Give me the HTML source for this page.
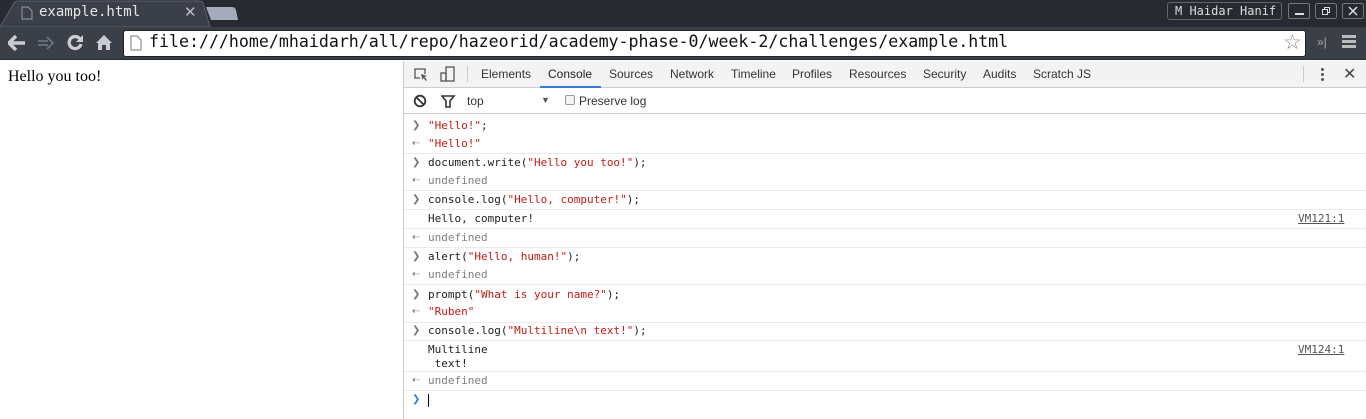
<!DOCTYPE html>
<html><head><meta charset="utf-8"><style>
*{margin:0;padding:0;box-sizing:border-box}
body{width:1366px;height:419px;overflow:hidden;background:#fff;position:relative;font-family:"Liberation Sans",sans-serif}
.abs{position:absolute}
.mono{font-family:"DejaVu Sans Mono","Liberation Mono",monospace}
.row{position:absolute;left:428px;font-family:"DejaVu Sans Mono",monospace;font-size:11px;color:#222;line-height:14px}
.s{color:#c41a16}
.u{color:#808080}
.ar{position:absolute;left:412px;font-size:10px;color:#777;line-height:14px}
.ln{position:absolute;left:404px;right:0;height:1px;background:#ebebeb}
.tab{position:absolute;top:67px;font-size:12px;color:#333}
</style></head><body>
<div class="abs" style="left:0;top:0;width:1366px;height:27px;background:#272a31"></div>
<svg class="abs" style="left:0;top:0" width="260" height="27">
<path d="M0 27 L14 3 Q15 1 18 1 L199 1 Q202 1 203 3 L210 27 Z" fill="#3b3f48" stroke="#5b6070"/>
<path d="M206 7 L232 7 Q235 7 236 10 L238 20 L211 20 Z" fill="#a3abbd"/>
</svg>
<svg class="abs" style="left:21px;top:6px" width="12" height="14"><path d="M1 1h6l4 4v8H1z" fill="none" stroke="#9a9ea8"/></svg>
<div class="abs mono" style="left:39px;top:4px;font-size:14px;color:#e6e6e6">example.html</div>
<div class="abs" style="left:184px;top:3px;font-size:15px;color:#bbb">✕</div>
<div class="abs mono" style="left:1167px;top:2px;width:115px;height:18px;border:1px solid #666;border-radius:3px;color:#ddd;font-size:12px;padding-left:7px;line-height:16px">M Haidar Hanif</div>
<div class="abs" style="left:1288px;top:3px;width:22px;height:16px;border:1px solid #777;border-radius:2px"><div class="abs" style="left:6px;top:9px;width:9px;height:2px;background:#ddd"></div></div>
<svg class="abs" style="left:1315px;top:3px" width="22" height="16"><rect x="0.5" y="0.5" width="21" height="15" rx="2" fill="none" stroke="#777"/><rect x="7.5" y="6.5" width="5" height="5" fill="none" stroke="#ddd"/><path d="M9.5 6.5V4.5h5v5h-2" fill="none" stroke="#ddd"/></svg>
<svg class="abs" style="left:1342px;top:3px" width="22" height="16"><rect x="0.5" y="0.5" width="21" height="15" rx="2" fill="none" stroke="#777"/><path d="M7 4l8 8M15 4l-8 8" stroke="#ddd" stroke-width="1.5"/></svg>
<div class="abs" style="left:0;top:27px;width:1366px;height:33px;background:#3b3f48;border-bottom:1px solid #2a2d33"></div>
<svg class="abs" style="left:8px;top:35px" width="18" height="16"><path d="M8 1L1 8l7 7M1 8h16" fill="none" stroke="#c9ccd2" stroke-width="3.5"/></svg>
<svg class="abs" style="left:37px;top:35px" width="18" height="16"><path d="M10 2l6 6-6 6M1 6h10M1 10h10" fill="none" stroke="#6d727c" stroke-width="1.8"/></svg>
<svg class="abs" style="left:67px;top:34px" width="17" height="17"><path d="M13 5A6 6 0 1 0 14 10" fill="none" stroke="#c9ccd2" stroke-width="3.3"/><path d="M16 1v7H9z" fill="#c9ccd2"/></svg>
<svg class="abs" style="left:95px;top:34px" width="18" height="17"><path d="M9 1 L1 9 H3 V16 H7 V11 H11 V16 H15 V9 H17 Z" fill="#c9ccd2"/></svg>
<div class="abs" style="left:123px;top:30px;width:1183px;height:27px;background:#fff;border:1px solid #222;border-radius:3px"></div>
<svg class="abs" style="left:130px;top:35px" width="12" height="16"><path d="M1 1h6l4 4v10H1z" fill="none" stroke="#777"/></svg>
<div class="abs mono" style="left:149px;top:32px;font-size:16.6px;color:#111">file:///home/mhaidarh/all/repo/hazeorid/academy-phase-0/week-2/challenges/example.html</div>
<div class="abs" style="left:1283px;top:30px;font-size:21px;color:#888">☆</div>
<div class="abs" style="left:1317px;top:35px;font-size:12px;color:#aaa">»|</div>
<div class="abs" style="left:1342px;top:35px;width:14px;height:3px;background:#bbb;box-shadow:0 5px 0 #bbb,0 10px 0 #bbb"></div>
<div class="abs" style="left:8px;top:68px;font-family:'Liberation Serif',serif;font-size:16px;color:#000">Hello you too!</div>
<div class="abs" style="left:403px;top:61px;width:1px;height:358px;background:#ccc"></div>
<div class="abs" style="left:404px;top:61px;width:962px;height:27px;background:#f3f3f3;border-bottom:1px solid #ccc"></div>
<svg class="abs" style="left:413px;top:67px" width="16" height="16"><path d="M7 11H2V2h10v5" fill="none" stroke="#555" stroke-width="1.3"/><path d="M8 7l6 2-2.5 1 2.5 3-1 1-2.5-3-1 2z" fill="#555"/></svg>
<svg class="abs" style="left:440px;top:66px" width="16" height="17"><rect x="6" y="1" width="8" height="14" fill="none" stroke="#555" stroke-width="1.3"/><rect x="1" y="7" width="5" height="8" fill="none" stroke="#555" stroke-width="1.3"/></svg>
<div class="abs" style="left:467px;top:66px;width:1px;height:16px;background:#ccc"></div>
<div class="tab" style="left:481px">Elements</div>
<div class="tab" style="left:548px;color:#222">Console</div>
<div class="abs" style="left:540px;top:86px;width:61px;height:2px;background:#3879d9"></div>
<div class="tab" style="left:609px">Sources</div>
<div class="tab" style="left:670px">Network</div>
<div class="tab" style="left:731px">Timeline</div>
<div class="tab" style="left:792px">Profiles</div>
<div class="tab" style="left:849px">Resources</div>
<div class="tab" style="left:923px">Security</div>
<div class="tab" style="left:983px">Audits</div>
<div class="tab" style="left:1033px">Scratch JS</div>
<div class="abs" style="left:1303px;top:66px;width:1px;height:16px;background:#ccc"></div>
<div class="abs" style="left:1321px;top:68px;width:3px;height:3px;background:#555;box-shadow:0 5px 0 #555,0 10px 0 #555;border-radius:50%"></div>
<div class="abs" style="left:1343px;top:64px;font-size:16px;color:#444">✕</div>
<div class="abs" style="left:404px;top:88px;width:962px;height:26px;border-bottom:1px solid #ccc;background:#fff"></div>
<svg class="abs" style="left:413px;top:94px" width="15" height="15"><circle cx="7" cy="7" r="5.3" fill="none" stroke="#333" stroke-width="1.8"/><path d="M3.5 3.5l7 7" stroke="#333" stroke-width="1.8"/></svg>
<svg class="abs" style="left:441px;top:95px" width="15" height="13"><path d="M1 1h12l-4 5v6h-4V6z" fill="none" stroke="#333" stroke-width="1.6"/></svg>
<div class="abs" style="left:467px;top:94px;font-size:12px;color:#333">top</div>
<div class="abs" style="left:541px;top:95px;font-size:9px;color:#555">▼</div>
<div class="abs" style="left:565px;top:95px;width:10px;height:10px;border:1px solid #999;border-radius:2px;background:#f4f4f4"></div>
<div class="abs" style="left:579px;top:94px;font-size:12px;color:#333">Preserve log</div>
<div class="ar" style="top:119px">❯</div><div class="row" style="top:119px"><span class="s">"Hello!"</span>;</div>
<div class="ar" style="top:137px">⇠</div><div class="row" style="top:137px"><span class="s">"Hello!"</span></div>
<div class="ln" style="top:153px"></div>
<div class="ar" style="top:156px">❯</div><div class="row" style="top:156px">document.write(<span class="s">"Hello you too!"</span>);</div>
<div class="ar" style="top:174px">⇠</div><div class="row u" style="top:174px">undefined</div>
<div class="ln" style="top:190px"></div>
<div class="ar" style="top:193px">❯</div><div class="row" style="top:193px">console.log(<span class="s">"Hello, computer!"</span>);</div>
<div class="ln" style="top:209px"></div>
<div class="row" style="top:212px">Hello, computer!</div>
<div class="row" style="top:212px;left:1298px;color:#555;text-decoration:underline">VM121:1</div>
<div class="ln" style="top:228px"></div>
<div class="ar" style="top:231px">⇠</div><div class="row u" style="top:231px">undefined</div>
<div class="ln" style="top:247px"></div>
<div class="ar" style="top:250px">❯</div><div class="row" style="top:250px">alert(<span class="s">"Hello, human!"</span>);</div>
<div class="ar" style="top:268px">⇠</div><div class="row u" style="top:268px">undefined</div>
<div class="ln" style="top:284px"></div>
<div class="ar" style="top:288px">❯</div><div class="row" style="top:288px">prompt(<span class="s">"What is your name?"</span>);</div>
<div class="ar" style="top:305px">⇠</div><div class="row" style="top:305px"><span class="s">"Ruben"</span></div>
<div class="ln" style="top:322px"></div>
<div class="ar" style="top:324px">❯</div><div class="row" style="top:324px">console.log(<span class="s">"Multiline\n text!"</span>);</div>
<div class="ln" style="top:340px"></div>
<div class="row" style="top:343px">Multiline<br>&nbsp;text!</div>
<div class="row" style="top:343px;left:1298px;color:#555;text-decoration:underline">VM124:1</div>
<div class="ln" style="top:371px"></div>
<div class="ar" style="top:374px">⇠</div><div class="row u" style="top:374px">undefined</div>
<div class="ln" style="top:390px"></div>
<div class="ar" style="top:393px;color:#3879d9">❯</div>
<div class="abs" style="left:428px;top:394px;width:1px;height:13px;background:#000"></div>
</body></html>
